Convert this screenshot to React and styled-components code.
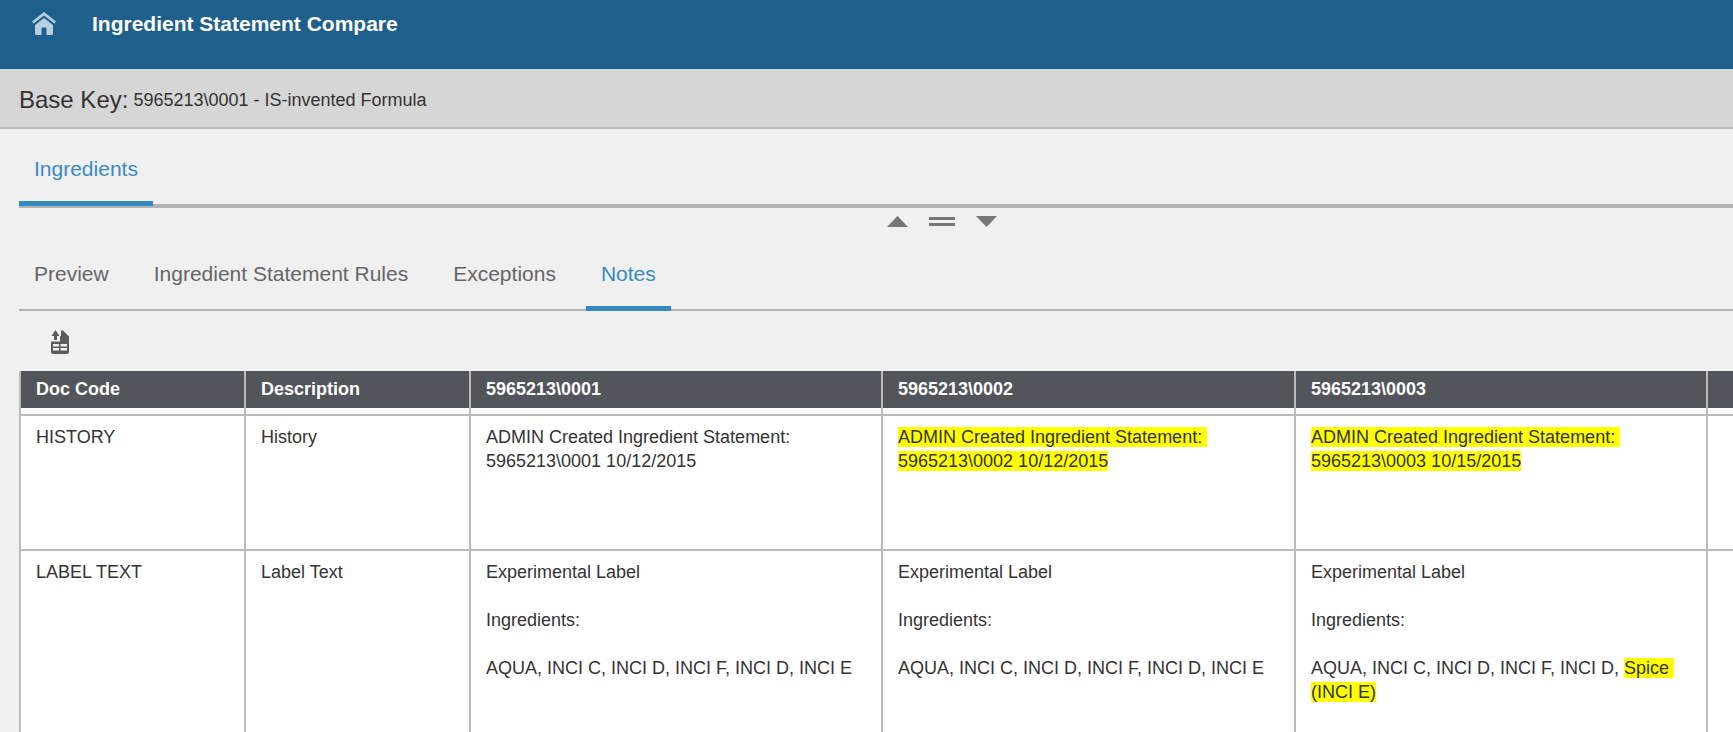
import styled, { createGlobalStyle } from "styled-components";

const GlobalStyle = createGlobalStyle`
  html, body {
    margin: 0;
    height: 100%;
    overflow: hidden;
    background: #f0f0f0;
    font-family: "Liberation Sans", Arial, sans-serif;
  }
`;

const Page = styled.div`
  height: 732px;
  display: flex;
  flex-direction: column;
  overflow: hidden;
`;

const AppBar = styled.header`
  flex: none;
  height: 69px;
  background: #1f5f8b;
  display: flex;
  align-items: flex-start;
  padding: 12px 0 0 32px;
  box-sizing: border-box;
`;

const AppTitle = styled.h1`
  margin: 0 0 0 36px;
  font-size: 21px;
  line-height: 24px;
  font-weight: 700;
  color: #fff;
`;

const KeyBar = styled.div`
  flex: none;
  height: 60px;
  background: #d6d6d6;
  border-bottom: 2px solid #bbb;
  box-sizing: border-box;
  display: flex;
  align-items: center;
  padding: 4px 0 0 19px;
  color: #333;
  font-size: 18px;
`;

const KeyLabel = styled.span`
  font-size: 24px;
  margin-right: 5px;
`;

const Content = styled.main`
  flex: 1;
  min-height: 0;
  padding-left: 19px;
  display: flex;
  flex-direction: column;
`;

const TopTabs = styled.div`
  flex: none;
  height: 75px;
  border-bottom: 4px solid #b3b3b3;
  display: flex;
`;

const Tab = styled.div`
  padding: 0 15px;
  font-size: 21px;
  color: ${(props) => (props.$active ? "#3a8ac4" : "#666")};
  box-shadow: ${(props) => (props.$active ? "inset 0 -5px 0 #3588c0" : "none")};
`;

const TopTab = styled(Tab)`
  height: 77px;
  padding-top: 28px;
  box-sizing: border-box;
  width: 134px;
`;

const Splitter = styled.div`
  flex: none;
  height: 25px;
  display: flex;
  align-items: center;
  justify-content: center;
  gap: 21px;
  padding: 2px 0 0 132px;
  box-sizing: border-box;
`;

const SubTabs = styled.div`
  flex: none;
  height: 76px;
  border-bottom: 2px solid #b3b3b3;
  display: flex;
  gap: 15px;
`;

const SubTab = styled(Tab)`
  height: 78px;
  padding-top: 29px;
  box-sizing: border-box;
`;

const Toolbar = styled.div`
  flex: none;
  height: 60px;
  display: flex;
  padding: 19px 0 0 32px;
  box-sizing: border-box;
`;

const Table = styled.div`
  flex: 1;
  min-height: 0;
  display: grid;
  grid-template-columns: 225px 225px 412px 413px 412px 1fr;
  grid-template-rows: 37px 6px 135px auto;
  overflow: hidden;
  background: #fff;
  align-content: start;
`;

const HeadCell = styled.div`
  background: #52555c;
  color: #fff;
  font-size: 18px;
  font-weight: 700;
  line-height: 36px;
  padding-left: 15px;
  border-left: 2px solid #bbb;
  box-sizing: border-box;
`;

const GapCell = styled.div`
  background: #fff;
  border-left: 2px solid #bbb;
`;

const Cell = styled.div`
  background: #fff;
  color: #333;
  font-size: 18px;
  line-height: 24px;
  padding: 9px 15px 0 15px;
  border-left: 2px solid #bbb;
  border-top: 2px solid #bbb;
  box-sizing: border-box;
  min-height: 200px;
`;

const Line = styled.div`
  min-height: 24px;
`;

const Mark = styled.span`
  background: #ffff00;
  white-space: pre-wrap;
`;

function HomeIcon() {
  return (
    <svg width="24" height="24" viewBox="0 0 24 24" fill="#b8cfe1">
      <path d="M12 0 L24 9.5 L22.4 11.6 L12 3.6 L1.6 11.6 L0 9.5 Z" />
      <path
        fillRule="evenodd"
        d="M12 6 L21 13 V21.5 Q21 23 19.5 23 H4.5 Q3 23 3 21.5 V13 Z M9.5 23 H14.5 V16.5 Q14.5 15.5 13.5 15.5 H10.5 Q9.5 15.5 9.5 16.5 Z"
      />
    </svg>
  );
}

function ImportIcon() {
  return (
    <svg width="18" height="24" viewBox="0 0 18 24" fill="#5c5c5c">
      <path d="M4.5 0 L8.5 6 H6 V10 H3 V6 H0.5 Z" />
      <path
        fillRule="evenodd"
        d="M10 0.5 H12 L18 6.5 V22 Q18 24 16 24 H2 Q0 24 0 22 V11.5 H9 V6 H10 Z M2 14 V16.5 H8 V14 Z M9.5 14 V16.5 H16 V14 Z M2 18 V20.5 H8 V18 Z M9.5 18 V20.5 H16 V18 Z"
      />
    </svg>
  );
}

function SplitterIcons() {
  return (
    <Splitter>
      <svg width="21" height="11" viewBox="0 0 21 11" fill="#777">
        <path d="M10.5 0 L21 11 H0 Z" />
      </svg>
      <svg width="26" height="9" viewBox="0 0 26 9" fill="#777">
        <rect width="26" height="3" />
        <rect y="6" width="26" height="3" />
      </svg>
      <svg width="21" height="11" viewBox="0 0 21 11" fill="#777">
        <path d="M0 0 H21 L10.5 11 Z" />
      </svg>
    </Splitter>
  );
}

const headers = [
  "Doc Code",
  "Description",
  "5965213\\0001",
  "5965213\\0002",
  "5965213\\0003",
  "",
];

const ingredients = "AQUA, INCI C, INCI D, INCI F, INCI D, ";

function LabelCell({ spice }) {
  return (
    <Cell>
      <Line>Experimental Label</Line>
      <Line />
      <Line>Ingredients:</Line>
      <Line />
      <Line>
        {ingredients}
        {spice ? <Mark>Spice (INCI E)</Mark> : "INCI E"}
      </Line>
    </Cell>
  );
}

export default function App() {
  return (
    <Page>
      <GlobalStyle />
      <AppBar>
        <HomeIcon />
        <AppTitle>Ingredient Statement Compare</AppTitle>
      </AppBar>
      <KeyBar>
        <KeyLabel>Base Key:</KeyLabel>
        5965213\0001 - IS-invented Formula
      </KeyBar>
      <Content>
        <TopTabs>
          <TopTab $active>Ingredients</TopTab>
        </TopTabs>
        <SplitterIcons />
        <SubTabs>
          <SubTab>Preview</SubTab>
          <SubTab>Ingredient Statement Rules</SubTab>
          <SubTab>Exceptions</SubTab>
          <SubTab $active>Notes</SubTab>
        </SubTabs>
        <Toolbar>
          <ImportIcon />
        </Toolbar>
        <Table>
          {headers.map((text, i) => (
            <HeadCell key={i}>{text}</HeadCell>
          ))}
          {headers.map((text, i) => (
            <GapCell key={i} />
          ))}
          <Cell>HISTORY</Cell>
          <Cell>History</Cell>
          <Cell>ADMIN Created Ingredient Statement: 5965213\0001 10/12/2015</Cell>
          <Cell>
            <Mark>ADMIN Created Ingredient Statement: 5965213\0002 10/12/2015</Mark>
          </Cell>
          <Cell>
            <Mark>ADMIN Created Ingredient Statement: 5965213\0003 10/15/2015</Mark>
          </Cell>
          <Cell />
          <Cell>LABEL TEXT</Cell>
          <Cell>Label Text</Cell>
          <LabelCell />
          <LabelCell />
          <LabelCell spice />
          <Cell />
        </Table>
      </Content>
    </Page>
  );
}
